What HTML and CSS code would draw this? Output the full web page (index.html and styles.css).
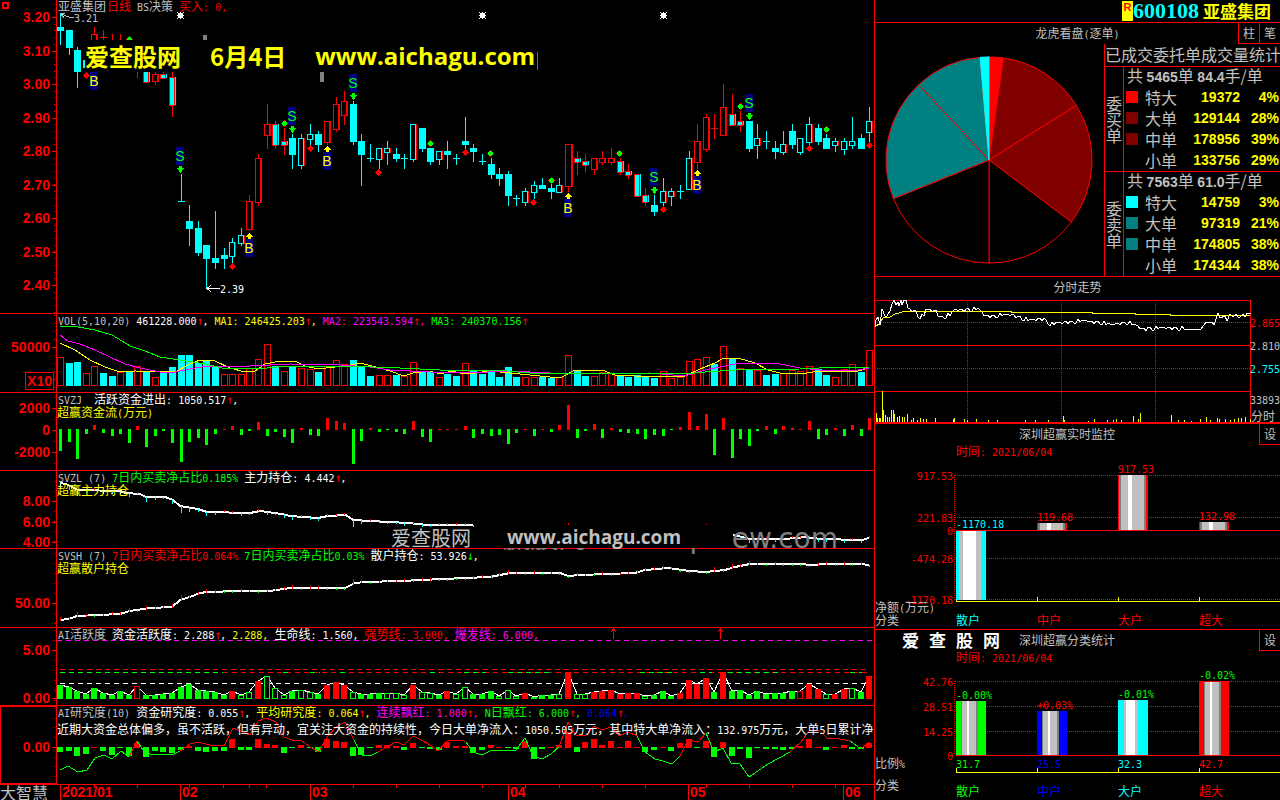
FILE: index.html
```html
<!DOCTYPE html>
<html lang="zh-CN">
<head>
<meta charset="utf-8">
<title>亚盛集团 600108</title>
<link rel="stylesheet" href="styles.css">
</head>
<body>
<main class="screen">
  <section class="left">
    <div class="panel">
      <div class="axis" id="ax-main"></div>
      <div class="plot" id="p-main">
        <div class="legend"><span>亚盛集团</span><span class="red tight">日线</span><span>BS决策</span><span class="red">买入: 0,</span></div>
        <div class="mark mark-top"><span>爱查股网</span><span>6月4日</span><span class="url">www.aichagu.com</span></div>
      </div>
    </div>
    <div class="panel">
      <div class="axis" id="ax-vol"></div>
      <div class="plot" id="p-vol">
        <div class="legend"><span>VOL(5,10,20)</span><span class="white">461228.000<i>↑</i>,</span><span class="yellow">MA1: 246425.203<i>↑</i>,</span><span class="magenta">MA2: 223543.594<i>↑</i>,</span><span class="green">MA3: 240370.156<i>↑</i></span></div>
      </div>
    </div>
    <div class="panel">
      <div class="axis" id="ax-zj"></div>
      <div class="plot" id="p-zj">
        <div class="legend wide"><span>SVZJ</span><span class="white">活跃资金进出: 1050.517<i>↑</i>,</span></div>
        <p class="sub yellow">超赢资金流(万元)</p>
      </div>
    </div>
    <div class="panel">
      <div class="axis" id="ax-zl"></div>
      <div class="plot" id="p-zl">
        <div class="legend"><span>SVZL (7)</span><span class="green">7日内买卖净占比0.185%</span><span class="white">主力持仓: 4.442<i>↑</i>,</span></div>
        <p class="sub yellow">超赢主力持仓</p>
        <p class="ghost">赢股网www.topview.com</p>
        <div class="mark mark-mid"><span>爱查股网</span><span class="url">www.aichagu.com</span></div>
      </div>
    </div>
    <div class="panel">
      <div class="axis" id="ax-sh"></div>
      <div class="plot" id="p-sh">
        <div class="legend"><span>SVSH (7)</span><span class="red">7日内买卖净占比0.064%</span><span class="green">7日内买卖净占比0.03%</span><span class="white">散户持仓: 53.926<i class="green">↓</i>,</span></div>
        <p class="sub yellow">超赢散户持仓</p>
      </div>
    </div>
    <div class="panel">
      <div class="axis" id="ax-ai"></div>
      <div class="plot" id="p-ai">
        <div class="legend"><span>AI活跃度</span><span class="white">资金活跃度: 2.288<i>↑</i>,</span><span class="yellow">2.288,</span><span class="white">生命线: 1.560,</span><span class="red">强势线: 3.000,</span><span class="magenta">爆发线: 6.000,</span></div>
      </div>
    </div>
    <div class="panel">
      <div class="axis axis-boxed" id="ax-re"></div>
      <div class="plot clip" id="p-re">
        <div class="legend"><span>AI研究度(10)</span><span class="white">资金研究度: 0.055<i>↑</i>,</span><span class="yellow">平均研究度: 0.064<i>↑</i>,</span><span class="magenta">连续飘红: 1.000<i>↑</i>,</span><span class="green">N日飘红: 6.000<i>↑</i>,</span><span class="blue">0.064<i>↑</i>,</span></div>
        <p class="note white">近期大资金总体偏多，虽不活跃，但有异动，宜关注大资金的持续性，今日大单净流入：1050.505万元，其中特大单净流入：132.975万元，大单5日累计净入</p>
      </div>
    </div>
    <div class="panel timeline">
      <div class="brand">大智慧</div>
      <div class="plot" id="p-time"></div>
    </div>
  </section>

  <aside class="right">
    <header class="stock"><b class="flag">R</b><b class="code">600108</b><b class="name">亚盛集团</b></header>
    <section class="orders">
      <div class="bar"><h2 class="shift">龙虎看盘(逐单)</h2><button type="button">柱</button><button type="button">笔</button></div>
      <div class="orders-body">
        <svg class="pie" viewBox="0 0 230 232" id="pie" aria-label="逐单成交占比"></svg>
        <div class="stats">
          <h3>已成交委托单成交量统计</h3>
          <div class="side">
            <p class="vert">委买单</p>
            <div class="group">
              <p class="total" id="buy-total">共 <b>5465</b>单 <b>84.4</b>手/单</p>
              <table aria-labelledby="buy-total">
                <tbody>
                  <tr><td><i class="sw sw-red"></i></td><th>特大</th><td>19372</td><td>4%</td></tr>
                  <tr><td><i class="sw sw-dark"></i></td><th>大单</th><td>129144</td><td>28%</td></tr>
                  <tr><td><i class="sw sw-dark"></i></td><th>中单</th><td>178956</td><td>39%</td></tr>
                  <tr><td></td><th>小单</th><td>133756</td><td>29%</td></tr>
                </tbody>
              </table>
            </div>
          </div>
          <div class="side">
            <p class="vert">委卖单</p>
            <div class="group">
              <p class="total" id="sell-total">共 <b>7563</b>单 <b>61.0</b>手/单</p>
              <table aria-labelledby="sell-total">
                <tbody>
                  <tr><td><i class="sw sw-cyan"></i></td><th>特大</th><td>14759</td><td>3%</td></tr>
                  <tr><td><i class="sw sw-teal"></i></td><th>大单</th><td>97319</td><td>21%</td></tr>
                  <tr><td><i class="sw sw-teal"></i></td><th>中单</th><td>174805</td><td>38%</td></tr>
                  <tr><td></td><th>小单</th><td>174344</td><td>38%</td></tr>
                </tbody>
              </table>
            </div>
          </div>
        </div>
      </div>
    </section>
    <section class="plot intraday" id="p-day"><div class="bar"><h2>分时走势</h2></div></section>
    <section class="plot monitor" id="p-mon">
      <div class="bar"><h2>深圳超赢实时监控</h2><button type="button">设</button></div>
      <p class="time">时间: 2021/06/04</p>
    </section>
    <section class="plot" id="p-cls">
      <div class="bar"><h2>深圳超赢分类统计</h2><button type="button">设</button></div>
      <p class="time">时间: 2021/06/04</p>
      <p class="mark mark-side"><span>爱</span><span>查</span><span>股</span><span>网</span></p>
    </section>
  </aside>
</main>
<script src="charts.js"></script>
</body>
</html>
```
FILE: styles.css
```css
:root {
  --red: #ff0000;
  --cyan: #00ffff;
  --green: #00ff00;
  --yellow: #ffff00;
  --magenta: #ff00ff;
  --grey: #c0c0c0;
}
* { box-sizing: border-box; }
body {
  margin: 0;
  background: #000;
  color: var(--grey);
  font: 12px/14px "Noto Sans CJK SC", sans-serif;
}
h2, h3, p { margin: 0; font-weight: 400; font-size: inherit; }
i { font-style: normal; color: var(--red); }
.red { color: var(--red); }
.white { color: #fff; }
.yellow { color: var(--yellow); }
.green, i.green { color: var(--green); }
.magenta { color: var(--magenta); }
.blue { color: #0000ff; }
.cyan { color: var(--cyan); }
.grey { color: var(--grey); }
.mono { font: 10px/10px "DejaVu Sans Mono", monospace; }

.screen {
  display: grid;
  grid-template-columns: minmax(0, 874fr) minmax(0, 406fr);
  grid-template-rows: minmax(0, 1fr);
  height: 100vh;
  min-height: 600px;
}
.left {
  display: grid;
  grid-template-rows:
    minmax(0, 314fr) minmax(0, 79fr) minmax(0, 78fr) minmax(0, 78fr)
    minmax(0, 79fr) minmax(0, 78fr) minmax(0, 79fr) minmax(0, 15fr);
}
.panel {
  display: grid;
  grid-template-columns: minmax(0, 57fr) minmax(0, 817fr);
  grid-template-rows: minmax(0, 1fr);
  border-bottom: 1px solid var(--red);
}
.timeline { border-bottom: 0; }
.axis {
  position: relative;
  border-right: 1px solid var(--red);
}
.axis-boxed { border: 1px solid var(--red); }
.plot { position: relative; }
.clip { overflow: hidden; }
.chart {
  position: absolute;
  inset: 0;
  width: 100%;
  height: 100%;
  shape-rendering: crispEdges;
}
.label {
  position: absolute;
  white-space: nowrap;
  transform: translateY(-50%);
}
.label-end { transform: translate(-100%, -50%); }
.label-mid { transform: translate(-50%, -50%); }
.scale { font: bold 14px/16px "Liberation Sans", sans-serif; color: var(--red); }
.boxed { border: 1px solid var(--red); padding: 0 1px; }
.flagmark {
  width: 8px;
  background: #000080;
  font: 14px/18px "Liberation Sans", sans-serif;
  text-align: center;
  display: flex;
  justify-content: center;
}
.legend {
  position: relative;
  z-index: 1;
  display: flex;
  gap: 6px;
  height: 13px;
  padding-left: 1px;
  line-height: 12px;
  white-space: nowrap;
}
.wide { gap: 12px; }
.tight { margin-left: -5px; }
.legend i {
  display: inline-block;
  width: 6px;
  font: 12px/10px "DejaVu Sans Mono", monospace;
}
.sub {
  position: relative;
  z-index: 1;
  white-space: nowrap;
  line-height: 12px;
}
.note { position: relative; z-index: 1; white-space: nowrap; line-height: 20px; }
.mark {
  position: absolute;
  z-index: 2;
  display: flex;
  white-space: nowrap;
}
.mark-top {
  left: 28px;
  top: 40px;
  gap: 29px;
  padding-right: 1px;
  background: #000;
  color: var(--yellow);
  font: bold 24px/32px "Noto Sans CJK SC", sans-serif;
}
.mark-top .url { font-family: "Open Sans", sans-serif; }
.mark-mid {
  left: 334px;
  top: 56px;
  width: 342px;
  gap: 36px;
  background: #000;
  color: var(--grey);
  font: 20px/21px "Noto Sans CJK SC", sans-serif;
}
.mark-mid .url { font: bold 19px/21px "Open Sans", sans-serif; }
.ghost {
  position: absolute;
  right: 36px;
  top: 52px;
  color: #808080;
  font: 28px/32px "DejaVu Sans", "Noto Sans CJK SC", sans-serif;
  white-space: nowrap;
  clip-path: inset(8px 0 0 0);
}
.mark-side {
  left: 27px;
  top: 0;
  gap: 10px;
  color: #fff;
  font: bold 17px/20px "Noto Sans CJK SC", sans-serif;
}
.brand { font-size: 16px; line-height: 15px; white-space: nowrap; }

.right {
  display: grid;
  grid-template-rows: minmax(0, 23fr) minmax(0, 254fr) minmax(0, 147fr) minmax(0, 206fr) minmax(0, 170fr);
  border-left: 1px solid var(--red);
}
.stock {
  display: flex;
  align-items: center;
  justify-content: flex-end;
  padding-right: 9px;
  border-bottom: 1px solid var(--red);
  line-height: 20px;
}
.flag {
  width: 11px;
  height: 20px;
  background: var(--yellow);
  color: var(--red);
  font: bold 11px/12px "Liberation Sans", sans-serif;
  text-align: center;
}
.code { color: var(--cyan); font: bold 22px/20px "Liberation Serif", serif; margin-right: 4px; }
.name { color: var(--yellow); font-size: 17px; }
.bar {
  position: relative;
  z-index: 1;
  display: flex;
  height: 21px;
}
.bar h2 { flex: 1; text-align: center; line-height: 20px; }
.bar .shift { padding-left: 42px; }
button {
  width: 21px;
  padding: 0;
  border: 1px solid var(--red);
  border-width: 0 0 1px 1px;
  background: #000;
  color: var(--grey);
  font: inherit;
}
.orders {
  display: flex;
  flex-direction: column;
  border-bottom: 1px solid var(--red);
}
.orders-body {
  display: grid;
  grid-template-columns: minmax(0, 229fr) minmax(0, 176fr);
  grid-template-rows: minmax(0, 1fr);
  flex: 1;
  min-height: 0;
}
.pie { width: 100%; height: 100%; }
.stats {
  display: flex;
  flex-direction: column;
  border-left: 1px solid var(--red);
  font-size: 16px;
}
.stats h3 { height: 22px; line-height: 20px; white-space: nowrap; }
.side { display: flex; flex: 1; min-height: 0; border-top: 1px solid var(--red); }
.vert {
  display: flex;
  align-items: center;
  width: 19px;
  padding: 0 1px;
  border-right: 1px solid var(--red);
  line-height: 16px;
}
.group { display: flex; flex: 1; flex-direction: column; }
.total { height: 19px; padding-left: 3px; line-height: 17px; white-space: nowrap; }
.total b { font: bold 14px/10px "Liberation Sans", sans-serif; }
table { width: 100%; border-collapse: collapse; line-height: 18px; }
th, td { padding: 0; height: 21px; vertical-align: middle; }
th { font-weight: 400; width: 36px; text-align: left; }
td {
  color: var(--yellow);
  font: bold 14px/18px "Liberation Sans", sans-serif;
  text-align: right;
}
td:first-child { width: 21px; text-align: left; }
td:last-child { width: 40px; padding-right: 1px; }
.sw { display: block; width: 12px; height: 12px; margin-left: 2px; }
.sw-red { background: #ff0000; }
.sw-dark { background: #800000; }
.sw-cyan { background: #00ffff; }
.sw-teal { background: #008080; }
.intraday { border-bottom: 2px solid var(--red); }
.monitor { border-bottom: 1px solid var(--red); }
.time { position: relative; z-index: 1; padding-left: 20%; line-height: 12px; color: var(--red); }
```
FILE: charts.js
```javascript
const NS = "http://www.w3.org/2000/svg";
const RED = "#ff0000", CYAN = "#00ffff", GREEN = "#00ff00", YELLOW = "#ffff00", MAGENTA = "#ff00ff";
const X = i => Math.round(60 + 8.61 * i);

function surface(id, x0, y0, w, h) {
  const host = document.getElementById(id);
  const svg = document.createElementNS(NS, "svg");
  svg.setAttribute("class", "chart");
  svg.setAttribute("viewBox", [x0, y0, w, h].join(" "));
  svg.setAttribute("preserveAspectRatio", "none");
  host.prepend(svg);
  const add = (tag, attrs) => {
    const el = document.createElementNS(NS, tag);
    for (const k in attrs) el.setAttribute(k, attrs[k]);
    svg.append(el);
  };
  return {
    rect: (x, y, w, h, fill) => add("rect", { x, y, width: w, height: h, fill }),
    box: (x, y, w, h, stroke) => add("rect", { x: x + .5, y: y + .5, width: w - 1, height: Math.max(h - 1, 1), fill: "#000", stroke }),
    line: (pts, stroke, width = 1) => add("polyline", { points: pts, fill: "none", stroke, "stroke-width": width }),
    dash: (x1, x2, y, stroke, d) => add("line", { x1, x2, y1: y + .5, y2: y + .5, stroke, "stroke-dasharray": d }),
    vdash: (x, y1, y2, stroke, d) => add("line", { x1: x + .5, x2: x + .5, y1, y2, stroke, "stroke-dasharray": d }),
    poly: (points, fill) => add("polygon", { points, fill }),
    label: (x, y, text, cls) => {
      const s = document.createElement("span");
      s.className = "label " + cls;
      s.textContent = text;
      s.style.left = (x - x0) / w * 100 + "%";
      s.style.top = (y - y0) / h * 100 + "%";
      host.append(s);
    }
  };
}

/* price scales */
function scale(id, y0, h, marks, minor) {
  const a = surface(id, 0, y0, 56, h);
  for (const [y, t] of marks) {
    a.rect(52, y, 4, 1, RED);
    a.label(50, y, t, "scale label-end");
  }
  if (minor) for (let y = marks[0][0] % minor + y0 - y0 % minor; y < y0 + h; y += minor) if (y > y0) a.rect(54, Math.round(y), 1, 1, RED);
  return a;
}
const main = ["3.20", "3.10", "3.00", "2.90", "2.80", "2.70", "2.60", "2.50", "2.40"].map((t, i) => [Math.round(17 + 33.5 * i), t]);
const ax = scale("ax-main", 0, 313, main, 6.7);
ax.box(2, 2, 7, 7, RED); ax.box(3, 3, 5, 5, RED);
const av = scale("ax-vol", 314, 78, [[347, "50000"]], 8);
av.label(54, 381, "X10", "scale label-end boxed");
scale("ax-zj", 393, 77, [[408, "2000"], [430, "0"], [452, "-2000"]], 11);
scale("ax-zl", 471, 77, [[501, "8.00"], [522, "6.00"], [542, "4.00"]], 10);
scale("ax-sh", 549, 78, [[603, "50.00"]], 10);
scale("ax-ai", 628, 77, [[650, "5.00"], [698, "0.00"]], 10);
scale("ax-re", 706, 78, [[747, "0.00"]], 10);

/* candles: high, top, bottom, low, kind */
const candles = `13 27 31 45 f|30 30 48 55 f|47 50 72 88 f|60 60 68 72 f|27 34 50 60 r|30 37 37 60 d|34 45 60 62 r|34 45 60 62 r|50 55 60 62 f|71 71 71 78 r|66 66 82 82 c|71 74 81 85 r|71 74 78 78 c|71 77 105 117 c|174 201 201 201 f|205 221 229 246 f|221 228 253 256 f|245 245 259 289 f|211 258 263 269 f|248 255 259 269 f|238 242 256 263 h|228 235 243 246 h|195 201 229 231 r|154 158 202 206 r|104 124 135 149 r|121 124 145 149 c|128 141 145 155 c|134 138 155 169 f|134 138 165 169 h|124 134 139 145 h|131 134 145 152 f|121 121 142 145 r|97 104 129 132 r|91 101 115 125 r|101 104 142 145 f|134 141 155 186 f|144 158 158 162 f|148 148 159 169 h|141 148 152 165 h|148 154 159 162 f|154 158 158 169 f|124 124 159 162 h|128 128 149 152 f|148 148 162 165 f|151 151 159 165 h|141 151 155 169 f|154 158 158 165 f|117 141 145 149 f|144 148 152 162 f|154 161 161 165 f|158 164 175 179 f|168 174 179 186 f|171 174 196 206 f|195 198 198 206 f|188 191 202 206 h|181 185 192 199 h|178 185 189 189 f|184 188 192 199 f|178 185 192 192 h|144 144 186 192 R|151 158 162 175 c|154 161 165 172 c|158 158 169 175 r|151 158 162 165 r|148 158 162 165 r|158 161 172 175 c|164 171 175 179 c|174 174 196 196 c|188 195 202 206 c|195 205 212 216 f|178 191 202 206 h|188 191 196 206 h|185 191 191 199 f|151 158 189 189 h|124 141 162 169 r|114 117 149 152 r|114 128 128 139 d|84 107 135 135 r|94 114 125 125 c|111 121 125 132 c|121 121 149 152 f|124 138 145 159 h|131 141 141 149 f|141 148 152 159 f|131 144 152 155 h|124 131 145 149 f|138 138 152 155 h|117 124 142 145 h|124 128 142 145 f|134 138 149 149 f|138 141 145 152 h|138 141 149 155 h|117 141 145 149 h|134 138 149 149 f|107 121 132 142 h`.split("|");
const m = surface("p-main", 57, 0, 817, 313);
candles.forEach((row, i) => {
  const [hi, top, bot, lo, k] = row.split(" ").map((v, n) => n < 4 ? +v : v);
  const x = X(i), c = "rRcd".includes(k) ? RED : CYAN;
  m.rect(x, hi, 1, lo - hi, c);
  if (top === bot) m.rect(x - 3, top, 7, 1, c);
  else if (k === "f") m.rect(x - 3, top, 7, bot - top, CYAN);
  else if (k === "c") { m.rect(x - 3, top, 6, bot - top + 1, RED); m.rect(x - 2, top + 1, 4, bot - top - 1, CYAN); m.rect(x + 3, top, 1, bot - top, CYAN); }
  else { m.box(x - 3, top, k === "h" ? 6 : 7, bot - top + 1, c); m.rect(x + (k === "R" ? 3 : k === "r" ? 2 : 3), top, k === "R" ? 2 : 1, bot - top + 1, RED); }
});
const diamond = (x, y, c) => { m.poly(`${x - 3},${y + .5} ${x + .5},${y - 3} ${x + 4},${y + .5} ${x + .5},${y + 4}`, c); };
[[86, 75], [232, 266], [310, 148], [378, 172], [465, 152], [533, 202], [663, 209], [809, 148], [869, 145]].forEach(p => diamond(...p, RED));
[[129, 39], [284, 123], [430, 143], [490, 153], [551, 180], [619, 153], [740, 106], [826, 129]].forEach(p => { diamond(...p, RED); m.rect(p[0] - 1, p[1] - 2, 3, 5, GREEN); m.rect(p[0] - 2, p[1] - 1, 5, 3, GREEN); });
[[94, 81], [249, 248], [327, 161], [568, 208], [697, 185]].forEach(([x, y]) => {
  m.poly(`${x - 3},${y - 11} ${x + .5},${y - 15} ${x + 4},${y - 11} ${x + 2},${y - 11} ${x + 2},${y - 9} ${x - 1},${y - 9} ${x - 1},${y - 11}`, YELLOW);
  m.label(x, y, "B", "label-mid flagmark yellow");
});
[[180, 156], [292, 116], [353, 83], [654, 177], [749, 103]].forEach(([x, y]) => {
  m.poly(`${x - 1},${y + 10} ${x + 2},${y + 10} ${x + 2},${y + 12} ${x + 4},${y + 12} ${x + .5},${y + 17} ${x - 3},${y + 12} ${x - 1},${y + 12}`, GREEN);
  m.label(x, y, "S", "label-mid flagmark green");
});
[180, 482, 663].forEach(x => {
  m.rect(x - 2, 13, 5, 5, "#fff"); m.rect(x, 12, 1, 7, "#fff"); m.rect(x - 3, 15, 7, 1, "#fff");
  [[-3, 12], [3, 12], [-3, 18], [3, 18]].forEach(([d, y]) => m.rect(x + d, y, 1, 1, "#fff"));
});
m.line("61,14 69,17 74,17", "#c0c0c0"); m.line("65,13 61,14 64,18", "#c0c0c0");
m.label(74, 17, "3.21", "grey");
m.line("207,288.5 220,288.5", "#fff"); m.line("211,285 207,288.5 211,292", "#fff");
m.label(220, 288, "2.39", "white");
m.rect(203, 35, 4, 5, "#808080"); m.rect(320, 71, 4, 11, "#808080"); m.rect(537, 52, 1, 18, "#806060");

/* volume: bar top and kind */
const vol = "357r363f362f373r366r373f376f372r372f366r372f377r372f367f355f355f363f360f366f374r374r374r368r359r344r366f371r366f368r369r372f366r360r364r360f366f376f375r375r375f376r362r371f372f377r374f376f363r371f374f371f377f367f377f377r377r377f378f377r355r371f376f376r372r373r375f377f375f377f378f371r378r377r361r359r357r364f346r359f368r369f370r375f374f373r370r371r366r369f375f377r369r364r372f350r".match(/\d+\w/g);
const v = surface("p-vol", 57, 314, 817, 78);
vol.forEach((s, i) => { const y = +s.slice(0, 3); (s[3] === "f" ? v.rect : v.box)(X(i) - 3, y, 7, 386 - y, s[3] === "f" ? CYAN : RED); });
v.line("60,343 75,350 90,360 105,367 120,372 135,371 175,372 190,364 200,360 215,361 230,368 245,372 255,371 265,364 280,361 295,361 305,366 318,369 335,367 350,365 360,363 372,366 390,371 404,376 413,373 430,371 440,374 452,371 460,373 475,373 490,371 530,375 550,377 562,377 575,370 602,370 615,375 655,377 685,376 700,369 715,363 724,358 738,358 755,363 768,370 780,373 800,374 820,371 850,371 858,371 869,368", YELLOW);
v.line("60,335 68,341 80,344 95,350 110,357 125,364 140,368 160,372 175,372 195,368 210,366 250,366 290,364 340,365 370,367 390,370 430,372 465,373 510,371 550,373 600,374 650,373 685,376 705,370 735,364 750,363 780,364 800,368 830,371 858,370 869,368", MAGENTA);
v.line("60,326 78,327 95,330 112,335 122,341 130,346 145,351 160,357 180,360 205,364 222,368 255,369 290,366 345,366 400,368 440,370 495,370 530,373 600,373 685,374 705,372 735,370 800,369 838,367 869,367", GREEN);

/* net money flow, signed height in pixels */
const flow = [-22, -13, -30, -5, 5, -4, -7, -5, -14, 4, -18, -7, -2, -14, -33, -13, -9, -16, -5, 1, 4, -6, -2, 8, -7, -3, -8, -14, 2, -6, -7, 12, 9, 7, -35, -12, 2, -3, -1, -3, -5, 9, -8, -13, 1, 1, 1, 4, -9, -5, -7, -6, -15, -4, 1, -7, 1, -3, 5, 25, -9, -2, 6, -9, 2, -3, -4, -5, -10, -6, -7, -1, 3, 18, 4, 16, -26, 12, -29, -10, -17, -2, 4, -5, 4, 2, 1, 9, -10, -6, 2, -7, 5, -7, 12];
const z = surface("p-zj", 57, 393, 817, 77);
flow.forEach((n, i) => n > 0 ? z.rect(X(i) - 1, 430 - n, 3, n, RED) : z.rect(X(i) - 1, 429, 3, -n, GREEN));

/* holdings */
function yAt(pts, x) {
  for (let i = 1; i < pts.length; i++) if (x <= pts[i][0] && x >= pts[i - 1][0]) {
    const [a, b] = [pts[i - 1], pts[i]];
    return Math.round(a[1] + (b[1] - a[1]) * (x - a[0]) / (b[0] - a[0]));
  }
}
const parse = s => s.split(" ").map(p => p.split(",").map(Number));
const l = surface("p-zl", 57, 471, 817, 77);
["60,483 66,484 72,487 78,490 120,491 126,493 140,494 146,497 165,497 173,500 180,506 198,509 207,512 250,513 260,511 282,514 290,516 318,518 328,516 346,515 353,520 370,521 408,523 428,525 473,525", "733,535 742,537 750,539 785,539 806,537 820,539 862,540 869,538"].forEach(s => {
  l.line(s, "#fff", 2);
  const pts = parse(s);
  for (let i = 0; i < 95; i++) { const y = yAt(pts, X(i)); if (y) flow[i] < 0 ? l.rect(X(i), y, 1, 2 - Math.round(flow[i] / 7), CYAN) : l.rect(X(i), y - 2, 1, 2, RED); }
});
l.rect(568, 523, 1, 2, RED); l.rect(706, 524, 1, 1, RED);
const s = surface("p-sh", 57, 549, 817, 78);
const sh = "60,620 69,619 77,616 120,614 130,611 150,608 172,607 180,600 190,597 200,593 207,592 240,591 270,591 290,588 345,588 355,583 365,582 400,581 465,578 490,577 510,573 560,573 568,576 580,575 635,573 645,570 668,568 690,571 705,572 725,570 735,567 750,564 800,564 812,565 825,564 860,564 869,565";
s.line(sh, "#fff", 2);
const shp = parse(sh);
for (let i = 0; i < 95; i++) { const y = yAt(shp, X(i)); if (y) flow[i] < 0 ? s.rect(X(i), y - 1 + Math.round(flow[i] / 9), 1, 2 - Math.round(flow[i] / 9), RED) : s.rect(X(i), y, 1, 2, GREEN); }

/* activity: capital letters are solid bars */
const act = "685G687G691G694G688G693G695G691G695G686r695G695G694G693G687G684G690G691G692G695G691R695g692g681R676g688g695g691G690g692g694G685R682R685R692g694G694G693G693g693g695g685R692g693g695G691R694g687g694G694G691G696g690g696g693R697G695G695G694g672R694g694g692R691R690R694R693R693R696g695G691G696G693R680R684R678R692G672R691G690G695G691G694G693G693G691G691r684R689R694g694R689R688g692G676R".match(/\d+\w/g);
const a = surface("p-ai", 57, 628, 817, 77);
a.dash(57, 874, 640, MAGENTA, "5 4");
a.dash(60, 870, 669, RED, "5 4");
a.dash(60, 223, 672, GREEN, "5 4"); a.dash(223, 870, 672, RED, "5 4");
[[283, 292], [310, 320], [340, 346], [430, 440], [464, 486], [508, 550], [640, 672], [700, 712], [728, 780], [850, 862]].forEach(([p, q]) => a.dash(p, q, 672, GREEN, "5 4"));
a.dash(60, 870, 683, "#fff", "5 4");
a.line(act.map((t, i) => `${X(i)},${+t.slice(0, 3)}`).join(" "), "#fff");
act.forEach((t, i) => { const y = +t.slice(0, 3), k = t[3], c = k.toLowerCase() === "g" ? GREEN : RED; (k < "a" ? a.rect : a.box)(X(i) - 3, y, 6, 699 - y, c); });
[613, 720].forEach(x => { a.rect(x, 629, 1, 10, RED); a.line(`${x - 2},632 ${x + .5},629 ${x + 3},632`, RED); });

/* research degree */
const res = [-5, -4, -9, -7, 1, -4, -8, -1, -9, 5, -10, -4, -5, -6, -3, 2, -4, -5, -4, -4, 9, -3, -3, 9, 4, 3, -6, -1, 3, -1, -5, 9, 7, 6, -9, -8, -1, 3, 3, 2, -3, 5, -1, -2, -3, 6, 2, 2, -6, -3, 3, 1, -1, -2, 7, -12, -2, 1, 3, 16, -5, 6, 9, 3, 7, 1, 7, 1, -5, -3, 1, -4, 5, 9, -1, 7, -10, 6, -9, -2, -11, -1, -2, -2, -3, -2, 2, 9, 1, -3, 1, 3, -2, -2, 5];
const r = surface("p-re", 57, 706, 817, 78);
res.forEach((n, i) => n > 0 ? r.rect(X(i) - 3, 748 - n, 6, n, RED) : r.rect(X(i) - 3, 747, 6, -n, GREEN));
[["60,770 68,766 78,772 87,770 95,758 104,755 112,759 121,751 129,757", GREEN], ["129,757 137,741", RED], ["137,741 143,750 150,754 172,755 180,751", GREEN],
["180,751 190,744 198,742 210,745 224,746 233,728 250,735 258,721 266,718 276,722 284,737 292,740 301,740 310,747 319,752 327,737 336,727 345,722 354,740", RED], ["354,740 362,755 370,756 378,752", GREEN],
["378,752 387,747 396,742 404,745 413,736 421,740 430,745 438,751 447,741 462,740 466,742", RED], ["466,742 473,752 482,755 490,751 516,750 525,738 533,756 542,759 551,754 559,747", GREEN],
["559,747 564,733 568,722 576,735 586,735 594,726 602,730 611,727 619,736 628,732 637,736", RED], ["637,736 645,752 655,759 663,761 672,764 680,756", GREEN], ["680,756 688,740 698,742 706,733", RED],
["706,733 714,752 723,748 731,763 740,764 749,777 768,764 790,752", GREEN], ["790,752 801,742 810,730 820,731 827,738 840,739 850,741", RED], ["850,741 861,749", GREEN], ["861,749 869,742", RED]].forEach(([p, c]) => r.line(p, c));

/* dates */
const t = surface("p-time", 57, 785, 817, 15);
[[60, "2021/01"], [180, "02"], [310, "03"], [508, "04"], [688, "05"], [843, "06"]].forEach(([x, d]) => { t.rect(x, 785, 1, 15, RED); t.label(x + 2, 792, d, "scale"); });
[68, 94, 137, 189, 223, 249, 266, 353, 396, 439, 482, 525, 559, 602, 645, 706, 749, 792, 835].forEach(x => t.rect(x, 785, 1, 3, RED));

/* order pie */
const pie = document.getElementById("pie");
const deg = [[0, 8, "#ff0000"], [8, 58, "#800000"], [58, 127, "#800000"], [127, 180, "#000"], [180, 248, "#000"], [248, 317, "#008080"], [317, 355, "#008080"], [355, 360, "#00ffff"]];
const at = d => `${(114.5 + 103.5 * Math.sin(d * Math.PI / 180)).toFixed(1)} ${(116 - 103.5 * Math.cos(d * Math.PI / 180)).toFixed(1)}`;
deg.forEach(([p, q, fill]) => {
  const el = document.createElementNS(NS, "path");
  el.setAttribute("d", `M114.5 116L${at(p)}A103.5 103.5 0 0 1 ${at(q)}Z`);
  el.setAttribute("fill", fill);
  el.setAttribute("stroke", fill === "#ff0000" || fill === "#00ffff" ? fill : RED);
  pie.append(el);
});

/* intraday */
const d = surface("p-day", 875, 277, 405, 145);
d.rect(875, 300, 376, 1, RED); d.rect(1250, 300, 1, 122, RED); d.rect(875, 345, 376, 1, RED); d.rect(875, 391, 376, 1, RED);
d.dash(875, 1250, 322, RED, "1 1"); d.dash(875, 1250, 368, RED, "1 1");
[967, 1061, 1155].forEach(x => d.vdash(x, 302, 422, RED, "1 1"));
d.line("875,327 879,324 883,318 890,317 895,314 904,311.5 1011,311.5 1012,312.5 1092,312.5 1093,313.5 1135,313.5 1136,314.5 1170,314.5 1171,315.5 1250,315.5", YELLOW);
const price = parse("906,301 908,309 915,311 920,317 924,315 926,310 936,311 940,317 950,315 955,310 978,309 985,316 1010,315 1020,317 1028,320 1044,319 1050,324 1078,321 1100,322 1110,325 1128,322 1135,325 1142,329 1150,328 1184,328");
let path = "875,327 876,320 878,317 880,325 882,309 885,316 887,316 890,311 892,304 894,300 896,305 898,302 899,306 901,300 902,305 904,300 906,300";
for (let x = 908, n = 0; x < 1184; x += 2, n++) path += ` ${x},${yAt(price, x) + [0, 0, 3, 0, 0, 3, 3, -1, 2, 0, 0, 0, 2][n % 13] - 1}`;
path += " 1184,329 1201,329 1206,322 1212,322 1214,325 1218,313 1220,318 1225,316 1227,321 1230,314 1233,317 1236,314 1239,318 1243,314 1245,317 1247,313 1251,313";
d.line(path, "#fff");
[[876, 9], [877, 4], [879, 4], [880, 4], [882, 31], [883, 12], [885, 7], [887, 5], [889, 5], [891, 12], [893, 12], [894, 8], [897, 5], [899, 6], [902, 5], [904, 5], [907, 8], [911, 2], [913, 4], [917, 2], [920, 4], [923, 3], [926, 3], [935, 4], [953, 3], [954, 4], [964, 3], [967, 2], [976, 3], [988, 2], [997, 2], [1025, 2], [1035, 2], [1048, 2], [1063, 6], [1064, 2], [1088, 1], [1094, 3], [1107, 2], [1113, 2], [1116, 3], [1121, 2], [1133, 6], [1138, 3], [1140, 9], [1171, 7], [1178, 2], [1184, 2], [1191, 1], [1200, 3], [1206, 5], [1210, 2], [1217, 4], [1219, 3], [1225, 3], [1230, 2], [1234, 3], [1238, 4], [1241, 4], [1245, 5], [1250, 3]].forEach(([x, h]) => d.rect(x, 422 - h, 1, h, YELLOW));
d.label(1250, 322, "2.865", "red"); d.label(1250, 345, "2.810", "grey"); d.label(1250, 368, "2.755", "cyan");
d.label(1250, 399, "33893", "grey"); d.label(1251, 416, "分时", "grey");

/* column charts: bands give the shading stripes across a column */
function column(g, x, y, h, bands) { bands.forEach(([dx, w, c]) => g.rect(x + dx, y, w, h, c)); }
const n = surface("p-mon", 875, 424, 405, 205);
n.vdash(954, 475, 600, RED, "1 1");
[475, 517, 558, 599].forEach(y => n.dash(955, 1280, y, RED, "1 1"));
n.rect(956, 530, 324, 1, RED);
n.rect(956, 601, 324, 1, YELLOW);
[956, 1037, 1118, 1199].forEach(x => n.rect(x, 597, 1, 4, YELLOW));
column(n, 956, 531, 69, [[0, 30, CYAN], [3, 22, "#c0c0c0"], [7, 13, "#fff"]]);
[[1037, 523, 7], [1118, 475, 55], [1199, 522, 8]].forEach(([x, y, h]) => column(n, x, y, h, [[0, 30, RED], [1, 27, "#808080"], [3, 23, "#c0c0c0"], [10, 4, "#fff"]]));
[[475, "917.53"], [517, "221.83"], [530, "0"], [558, "-474.28"], [599, "-1170.18"]].forEach(([y, s]) => n.label(953, y, s, "red label-end"));
n.label(956, 523, "-1170.18", "cyan"); n.label(1037, 516, "119.68", "red"); n.label(1118, 468, "917.53", "red"); n.label(1199, 515, "132.98", "red");
n.label(875, 607, "净额(万元)", "grey"); n.label(875, 620, "分类", "grey");
[[956, "散户", "cyan"], [1037, "中户", "red"], [1118, "大户", "red"], [1199, "超大", "red"]].forEach(([x, s, c]) => n.label(x, 620, s, c));

const k = surface("p-cls", 875, 630, 405, 170);
k.vdash(954, 681, 755, RED, "1 1");
[681, 706, 731].forEach(y => k.dash(955, 1280, y, RED, "1 1"));
k.rect(956, 755, 324, 1, RED);
k.rect(956, 772, 324, 1, YELLOW);
[956, 1037, 1118, 1199].forEach(x => k.rect(x, 768, 1, 4, YELLOW));
[[956, 701, GREEN, 11], [1037, 711, "#0000ff", 11], [1199, 682, RED, 11]].forEach(([x, y, c, w]) => column(k, x, y, 755 - y, [[0, 30, c], [5, 17, "#808080"], [6, 14, "#c0c0c0"], [w, 2, "#fff"]]));
k.rect(1199, 681, 30, 1, RED);
column(k, 1118, 700, 55, [[0, 30, CYAN], [6, 14, "#c0c0c0"], [8, 9, "#fff"]]);
[[681, "42.76"], [706, "28.51"], [731, "14.25"], [755, "0"]].forEach(([y, s]) => k.label(953, y, s, "red label-end"));
k.label(956, 694, "-0.00%", "green"); k.label(1037, 704, "+0.03%", "red"); k.label(1118, 693, "-0.01%", "green"); k.label(1199, 674, "-0.02%", "green");
k.label(875, 763, "比例%", "grey"); k.label(875, 785, "分类", "grey");
[[956, "31.7", "散户", "green"], [1037, "25.5", "中户", "blue"], [1118, "32.3", "大户", "cyan"], [1199, "42.7", "超大", "red"]].forEach(([x, p, s, c]) => { k.label(x, 763, p, c); k.label(x, 791, s, c); });

/* Latin runs inside 12px captions use half-width monospaced figures */
document.querySelectorAll(".legend span, .sub, .note, .bar h2, .time, .label:not(.scale):not(.flagmark)").forEach(el => {
  [...el.childNodes].filter(c => c.nodeType === 3).forEach(c => {
    const parts = c.data.split(/([\x20-\x7e]+)/).filter(Boolean).map(p => {
      if (!/^[\x20-\x7e]+$/.test(p)) return p;
      const run = document.createElement("span");
      run.className = "mono";
      run.textContent = p;
      return run;
    });
    c.replaceWith(...parts);
  });
});
```
